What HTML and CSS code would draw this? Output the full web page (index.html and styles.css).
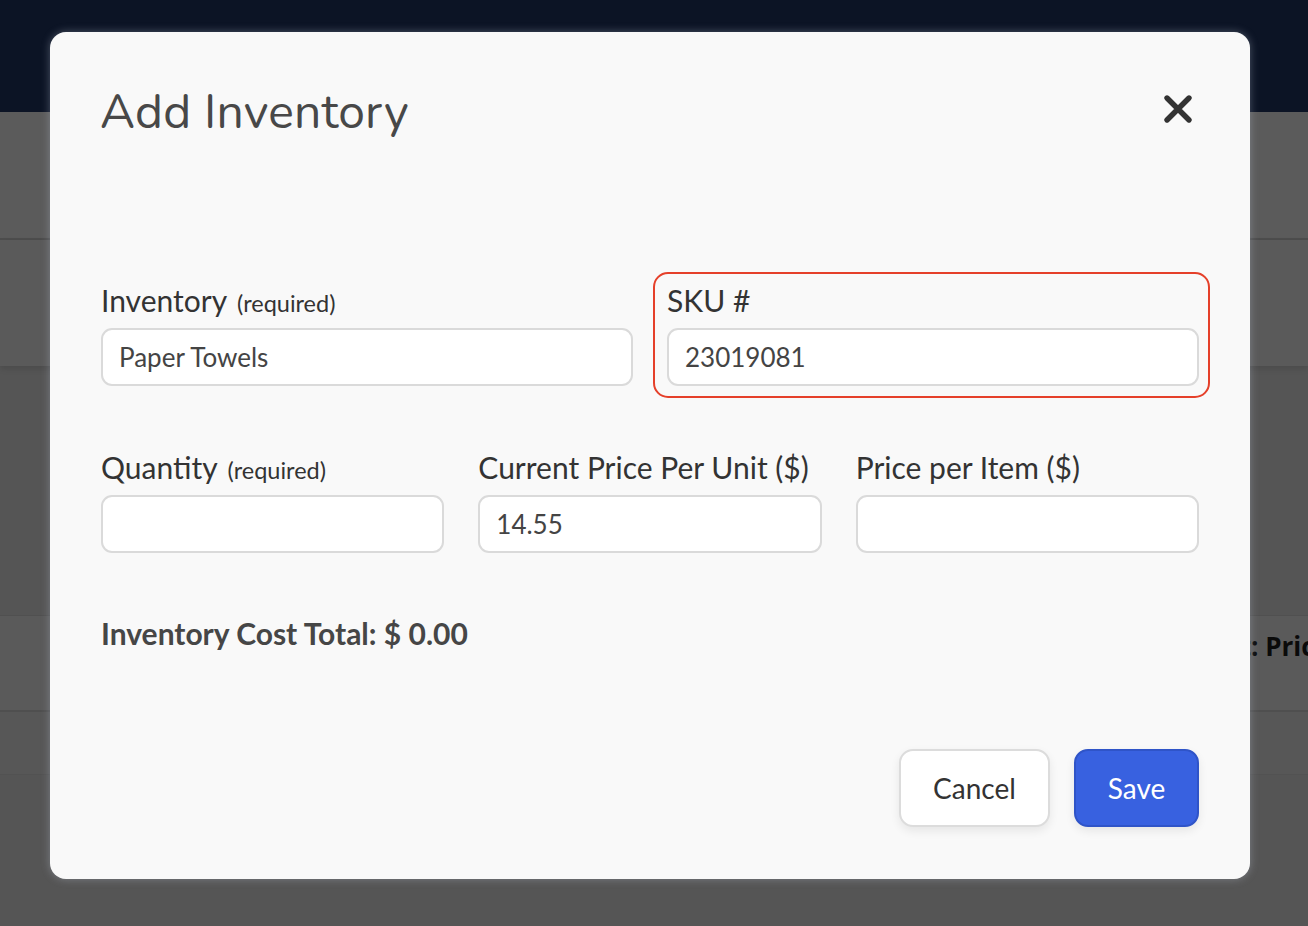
FILE: index.html
```html
<!DOCTYPE html>
<html>
<head>
<meta charset="utf-8">
<link rel="stylesheet" href="styles.css">
</head>
<body>
<div class="page">
  <div class="topbar"></div>
  <div class="band band-a"></div>
  <div class="band band-b"></div>
  <div class="band band-c"></div>
  <div class="band band-d"><span class="bg-text">Cost: Price</span></div>
  <div class="band band-e"></div>
  <div class="band band-f"></div>
</div>

<div class="modal">
  <div class="modal-head">
    <h1 class="title">Add Inventory</h1>
    <button class="close" aria-label="Close">
      <svg width="30" height="30" viewBox="0 0 30 30"><path d="M4 4L26 26M26 4L4 26" stroke="#333" stroke-width="5.4" stroke-linecap="round"/></svg>
    </button>
  </div>

  <div class="row two">
    <div class="field">
      <label class="label">Inventory <span class="req">(required)</span></label>
      <div class="input">Paper Towels</div>
    </div>
    <div class="field highlight">
      <label class="label">SKU #</label>
      <div class="input">23019081</div>
    </div>
  </div>

  <div class="row three">
    <div class="field">
      <label class="label">Quantity <span class="req">(required)</span></label>
      <div class="input"></div>
    </div>
    <div class="field">
      <label class="label">Current Price Per Unit ($)</label>
      <div class="input">14.55</div>
    </div>
    <div class="field">
      <label class="label">Price per Item ($)</label>
      <div class="input"></div>
    </div>
  </div>

  <div class="total">Inventory Cost Total: $ 0.00</div>

  <div class="actions">
    <button class="btn cancel">Cancel</button>
    <button class="btn save">Save</button>
  </div>
</div>
</body>
</html>
```

FILE: styles.css
```css
html, body {
  margin: 0;
  padding: 0;
  width: 1308px;
  height: 926px;
  overflow: hidden;
  background: #555555;
  font-family: "Lato", "Open Sans", sans-serif;
}
.page {
  display: flex;
  flex-direction: column;
  height: 926px;
}
.topbar { height: 112px; background: #0c1425; }
.band { background: #5b5b5b; }
.band-a { height: 126px; border-bottom: 2px solid #4d4d4d; }
.band-b { height: 126px; background: #5a5a5a; box-shadow: 0 3px 6px rgba(0,0,0,0.12); position: relative; }
.band-c { height: 249px; background: #555555; border-bottom: 1px solid #505050; }
.band-d {
  height: 94px;
  background: #5a5a5a;
  border-bottom: 2px solid #4f4f4f;
  display: flex;
  justify-content: flex-end;
  align-items: flex-start;
  overflow: hidden;
}
.bg-text {
  font-family: "Open Sans", sans-serif;
  font-weight: 700;
  font-size: 26px;
  line-height: 36px;
  color: #0a0a0a;
  margin-right: -22px;
  margin-top: 12px;
  white-space: nowrap;
}
.band-e { height: 62px; background: #575757; border-bottom: 1px solid #525252; }
.band-f { flex: 1; background: #555555; }

.modal {
  position: absolute;
  left: 50px;
  top: 32px;
  width: 1200px;
  height: 847px;
  box-sizing: border-box;
  background: #f9f9f9;
  border-radius: 16px;
  box-shadow: 0 0 8px rgba(200, 210, 225, 0.35);
  padding: 0 51px;
  display: flex;
  flex-direction: column;
}
.modal-head {
  display: flex;
  justify-content: space-between;
  align-items: flex-start;
  height: 250px;
}
.title {
  margin: 52px 0 0 -1px;
  font-family: "Nunito", "Lato", sans-serif;
  font-weight: 400;
  font-size: 48px;
  line-height: 56px;
  color: #484848;
  letter-spacing: 0.2px;
}
.close {
  margin: 62px 6px 0 0;
  padding: 0;
  border: none;
  background: none;
  width: 30px;
  height: 30px;
  display: flex;
}
.row {
  display: grid;
  gap: 34px;
}
.row.two { grid-template-columns: 1fr 1fr; }
.row.three { grid-template-columns: 1fr 1fr 1fr; margin-top: 63px; }
.field {
  display: flex;
  flex-direction: column;
  gap: 10px;
}
.field.highlight {
  position: relative;
}
.field.highlight::before {
  content: "";
  position: absolute;
  left: -14px;
  right: -11px;
  top: -10px;
  bottom: -12px;
  border: 2.5px solid #e5402a;
  border-radius: 15px;
  pointer-events: none;
}
.label {
  font-size: 30px;
  line-height: 36px;
  height: 36px;
  color: #333333;
  white-space: nowrap;
}
.req {
  font-size: 23.5px;
  line-height: 1;
  margin-left: 3px;
}
.input {
  height: 58px;
  box-sizing: border-box;
  background: #ffffff;
  border: 2px solid #dadada;
  border-radius: 11px;
  padding: 0 16px;
  display: flex;
  align-items: center;
  font-size: 26px;
  color: #444444;
}
.total {
  margin-top: 60px;
  font-size: 30px;
  font-weight: 700;
  color: #464646;
  line-height: 40px;
}
.actions {
  margin-top: 96px;
  display: flex;
  justify-content: flex-end;
  gap: 24px;
}
.btn {
  height: 78px;
  border-radius: 14px;
  font-family: "Lato", sans-serif;
  font-size: 28px;
  padding: 0;
  box-sizing: border-box;
}
.cancel {
  width: 151px;
  background: #ffffff;
  border: 2px solid #dcdcdc;
  color: #333333;
  box-shadow: 0 4px 10px rgba(0,0,0,0.08);
}
.save {
  width: 125px;
  background: #3861e0;
  border: 2px solid #2f54c8;
  color: #ffffff;
  box-shadow: 0 4px 10px rgba(0,0,0,0.08);
}
```
